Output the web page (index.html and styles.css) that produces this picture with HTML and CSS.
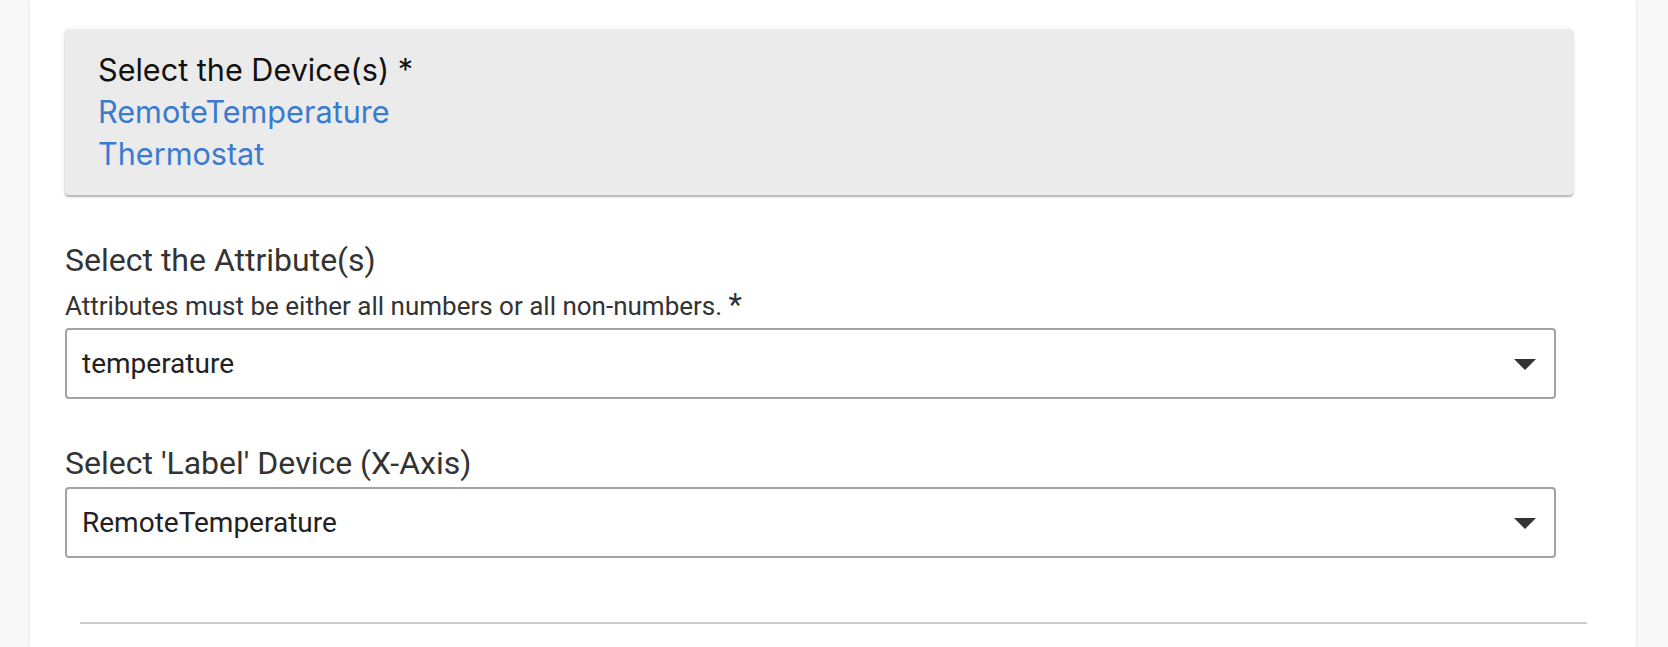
FILE: index.html
```html
<!DOCTYPE html>
<html>
<head>
<meta charset="utf-8">
<link rel="stylesheet" href="styles.css">
</head>
<body>
<div class="page">
  <div class="card">
    <div class="device-box">
      <div class="device-title">Select the Device(s) *</div>
      <a class="device-link">RemoteTemperature</a>
      <a class="device-link">Thermostat</a>
    </div>

    <div class="field attr-field">
      <div class="label">Select the Attribute(s)</div>
      <div class="desc">Attributes must be either all numbers or all non-numbers. <span class="req">*</span></div>
      <div class="select">
        <span class="value">temperature</span>
        <svg class="caret" width="22" height="11" viewBox="0 0 22 11"><path d="M0 0 H22 L11 11 Z" fill="#333"/></svg>
      </div>
    </div>

    <div class="field label-field">
      <div class="label">Select 'Label' Device (X-Axis)</div>
      <div class="select">
        <span class="value">RemoteTemperature</span>
        <svg class="caret" width="22" height="11" viewBox="0 0 22 11"><path d="M0 0 H22 L11 11 Z" fill="#333"/></svg>
      </div>
    </div>

    <div class="divider"></div>
  </div>
</div>
</body>
</html>
```

FILE: styles.css
```css
html, body {
  margin: 0;
  padding: 0;
  background: #f8f8f8;
  height: 647px;
  overflow: hidden;
}

.page {
  padding: 0 32px 0 30px;
  height: 647px;
}

.card {
  background: #ffffff;
  height: 647px;
  box-sizing: border-box;
  padding: 29px 0 0 35px;
  box-shadow: 0 0 3px rgba(0, 0, 0, 0.12);
}

.device-box {
  background: #ebebeb;
  border-radius: 4px;
  margin-right: 63px;
  padding: 20px 33px 20px 33px;
  height: 166px;
  box-sizing: border-box;
  box-shadow: 0 2px 2px rgba(0, 0, 0, 0.28), 0 0 6px rgba(0, 0, 0, 0.06);
  font-family: Inter, "Liberation Sans", sans-serif;
  font-size: 30.6px;
  line-height: 42px;
  display: flex;
  flex-direction: column;
}

.device-title {
  color: #111;
}

.device-link {
  color: #3a7bd0;
}

.field {
  margin-right: 80px;
  font-family: Roboto, "Noto Sans", sans-serif;
}

.attr-field {
  margin-top: 47px;
}

.label-field {
  margin-top: 46px;
}

.label {
  font-size: 32px;
  line-height: 36px;
  color: #333;
}

.desc {
  margin-top: 14px;
  font-size: 26px;
  line-height: 28px;
  color: #333;
}

.req {
  font-size: 31px;
  line-height: 20px;
  color: #333;
}

.attr-field .select {
  margin-top: 8px;
}

.label-field .select {
  margin-top: 6px;
}

.select {
  height: 71px;
  box-sizing: border-box;
  border: 2px solid #a3a3a3;
  border-radius: 4px;
  display: flex;
  align-items: center;
  justify-content: space-between;
  padding: 0 18px 0 15px;
}

.value {
  font-size: 28px;
  color: #222;
}

.caret {
  display: block;
  margin-top: 2px;
}

.divider {
  margin: 64px 49px 0 15px;
  height: 2px;
  background: #cccccc;
}
```
